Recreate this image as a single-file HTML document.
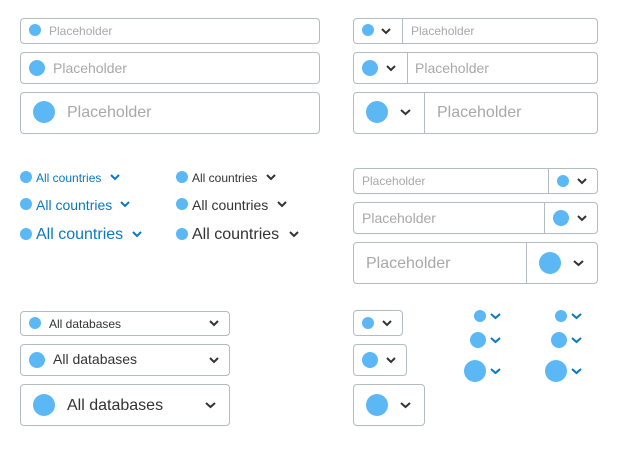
<!DOCTYPE html>
<html><head><meta charset="utf-8"><style>
*{margin:0;padding:0;box-sizing:border-box}
body{width:617px;height:455px;background:#fff;position:relative;overflow:hidden;font-family:"Liberation Sans",sans-serif}
div,svg{position:absolute}
.b{border:1px solid #b4bcbf;border-radius:4px;background:#fff}
.d{background:#5bb8f5;border-radius:50%}
.v{width:1px;background:#b4bcbf}
.t{white-space:nowrap;margin-top:1px}
.p{color:#a8a8a8}
.k{color:#333}
.u{color:#0a79c1}
</style></head><body>
<div class="b" style="left:20px;top:18px;width:300px;height:26px"></div>
<div class="d" style="left:29px;top:24px;width:12px;height:12px"></div>
<div class="t p" style="left:49px;top:23px;font-size:12px;line-height:15px">Placeholder</div>
<div class="b" style="left:20px;top:52px;width:300px;height:32px"></div>
<div class="d" style="left:29px;top:60px;width:16px;height:16px"></div>
<div class="t p" style="left:53px;top:59px;font-size:14px;line-height:17px">Placeholder</div>
<div class="b" style="left:20px;top:92px;width:300px;height:42px"></div>
<div class="d" style="left:33px;top:101px;width:22px;height:22px"></div>
<div class="t p" style="left:67px;top:102px;font-size:16px;line-height:20px">Placeholder</div>

<div class="b" style="left:353px;top:18px;width:245px;height:26px"></div>
<div class="v" style="left:402px;top:18px;height:26px"></div>
<div class="d" style="left:362px;top:24px;width:12px;height:12px"></div>
<svg style="left:381px;top:28px" width="10" height="7"><polyline points="1,1 5,5 9,1" fill="none" stroke="#333" stroke-width="2"/></svg>
<div class="t p" style="left:411px;top:23px;font-size:12px;line-height:15px">Placeholder</div>
<div class="b" style="left:353px;top:52px;width:245px;height:32px"></div>
<div class="v" style="left:407px;top:52px;height:32px"></div>
<div class="d" style="left:362px;top:60px;width:16px;height:16px"></div>
<svg style="left:386px;top:65px" width="10" height="7"><polyline points="1,1 5,5 9,1" fill="none" stroke="#333" stroke-width="2"/></svg>
<div class="t p" style="left:415px;top:59px;font-size:14px;line-height:17px">Placeholder</div>
<div class="b" style="left:353px;top:92px;width:245px;height:42px"></div>
<div class="v" style="left:424px;top:92px;height:42px"></div>
<div class="d" style="left:366px;top:101px;width:22px;height:22px"></div>
<svg style="left:400px;top:109px" width="11" height="7"><polyline points="1,1 5.5,5 10,1" fill="none" stroke="#333" stroke-width="2"/></svg>
<div class="t p" style="left:437px;top:102px;font-size:16px;line-height:20px">Placeholder</div>

<div class="d" style="left:20px;top:171px;width:12px;height:12px"></div>
<div class="t u" style="left:36px;top:170px;font-size:12px;line-height:15px">All countries</div>
<svg style="left:110px;top:174px" width="10" height="7"><polyline points="1,1 5,5 9,1" fill="none" stroke="#0a79c1" stroke-width="2"/></svg>
<div class="d" style="left:20px;top:198px;width:12px;height:12px"></div>
<div class="t u" style="left:36px;top:196px;font-size:14px;line-height:17px">All countries</div>
<svg style="left:120px;top:201px" width="10" height="7"><polyline points="1,1 5,5 9,1" fill="none" stroke="#0a79c1" stroke-width="2"/></svg>
<div class="d" style="left:20px;top:228px;width:12px;height:12px"></div>
<div class="t u" style="left:36px;top:224px;font-size:16px;line-height:20px">All countries</div>
<svg style="left:132px;top:231px" width="10" height="7"><polyline points="1,1 5,5 9,1" fill="none" stroke="#0a79c1" stroke-width="2"/></svg>
<div class="d" style="left:176px;top:171px;width:12px;height:12px"></div>
<div class="t k" style="left:192px;top:170px;font-size:12px;line-height:15px">All countries</div>
<svg style="left:266px;top:174px" width="10" height="7"><polyline points="1,1 5,5 9,1" fill="none" stroke="#333" stroke-width="2"/></svg>
<div class="d" style="left:176px;top:198px;width:12px;height:12px"></div>
<div class="t k" style="left:192px;top:196px;font-size:14px;line-height:17px">All countries</div>
<svg style="left:277px;top:201px" width="10" height="7"><polyline points="1,1 5,5 9,1" fill="none" stroke="#333" stroke-width="2"/></svg>
<div class="d" style="left:176px;top:228px;width:12px;height:12px"></div>
<div class="t k" style="left:192px;top:224px;font-size:16px;line-height:20px">All countries</div>
<svg style="left:289px;top:231px" width="10" height="7"><polyline points="1,1 5,5 9,1" fill="none" stroke="#333" stroke-width="2"/></svg>

<div class="b" style="left:353px;top:168px;width:245px;height:26px"></div>
<div class="v" style="left:548px;top:168px;height:26px"></div>
<div class="t p" style="left:362px;top:173px;font-size:12px;line-height:15px">Placeholder</div>
<div class="d" style="left:557px;top:175px;width:12px;height:12px"></div>
<svg style="left:577px;top:178px" width="10" height="7"><polyline points="1,1 5,5 9,1" fill="none" stroke="#333" stroke-width="2"/></svg>
<div class="b" style="left:353px;top:202px;width:245px;height:32px"></div>
<div class="v" style="left:544px;top:202px;height:32px"></div>
<div class="t p" style="left:362px;top:209px;font-size:14px;line-height:17px">Placeholder</div>
<div class="d" style="left:553px;top:210px;width:16px;height:16px"></div>
<svg style="left:577px;top:215px" width="10" height="7"><polyline points="1,1 5,5 9,1" fill="none" stroke="#333" stroke-width="2"/></svg>
<div class="b" style="left:353px;top:242px;width:245px;height:42px"></div>
<div class="v" style="left:526px;top:242px;height:42px"></div>
<div class="t p" style="left:366px;top:253px;font-size:16px;line-height:20px">Placeholder</div>
<div class="d" style="left:539px;top:252px;width:22px;height:22px"></div>
<svg style="left:573px;top:260px" width="11" height="7"><polyline points="1,1 5.5,5 10,1" fill="none" stroke="#333" stroke-width="2"/></svg>

<div class="b" style="left:20px;top:311px;width:210px;height:25px"></div>
<div class="d" style="left:29px;top:317px;width:12px;height:12px"></div>
<div class="t k" style="left:49px;top:316px;font-size:12px;line-height:15px">All databases</div>
<svg style="left:209px;top:320px" width="10" height="7"><polyline points="1,1 5,5 9,1" fill="none" stroke="#333" stroke-width="2"/></svg>
<div class="b" style="left:20px;top:344px;width:210px;height:32px"></div>
<div class="d" style="left:29px;top:352px;width:16px;height:16px"></div>
<div class="t k" style="left:53px;top:350px;font-size:14px;line-height:17px">All databases</div>
<svg style="left:209px;top:357px" width="10" height="7"><polyline points="1,1 5,5 9,1" fill="none" stroke="#333" stroke-width="2"/></svg>
<div class="b" style="left:20px;top:384px;width:210px;height:42px"></div>
<div class="d" style="left:33px;top:394px;width:22px;height:22px"></div>
<div class="t k" style="left:67px;top:395px;font-size:16px;line-height:20px">All databases</div>
<svg style="left:205px;top:402px" width="11" height="7"><polyline points="1,1 5.5,5 10,1" fill="none" stroke="#333" stroke-width="2"/></svg>

<div class="b" style="left:353px;top:310px;width:50px;height:26px"></div>
<div class="d" style="left:362px;top:317px;width:12px;height:12px"></div>
<svg style="left:382px;top:320px" width="10" height="7"><polyline points="1,1 5,5 9,1" fill="none" stroke="#333" stroke-width="2"/></svg>
<div class="b" style="left:353px;top:344px;width:54px;height:32px"></div>
<div class="d" style="left:362px;top:352px;width:16px;height:16px"></div>
<svg style="left:386px;top:357px" width="10" height="7"><polyline points="1,1 5,5 9,1" fill="none" stroke="#333" stroke-width="2"/></svg>
<div class="b" style="left:353px;top:384px;width:72px;height:42px"></div>
<div class="d" style="left:366px;top:394px;width:22px;height:22px"></div>
<svg style="left:400px;top:402px" width="11" height="7"><polyline points="1,1 5.5,5 10,1" fill="none" stroke="#333" stroke-width="2"/></svg>

<div class="d" style="left:474px;top:310px;width:12px;height:12px"></div>
<svg style="left:490px;top:313px" width="11" height="7"><polyline points="1,1 5.5,5 10,1" fill="none" stroke="#0a79c1" stroke-width="2"/></svg>
<div class="d" style="left:470px;top:332px;width:16px;height:16px"></div>
<svg style="left:490px;top:337px" width="11" height="7"><polyline points="1,1 5.5,5 10,1" fill="none" stroke="#0a79c1" stroke-width="2"/></svg>
<div class="d" style="left:464px;top:360px;width:22px;height:22px"></div>
<svg style="left:490px;top:368px" width="11" height="7"><polyline points="1,1 5.5,5 10,1" fill="none" stroke="#0a79c1" stroke-width="2"/></svg>
<div class="d" style="left:555px;top:310px;width:12px;height:12px"></div>
<svg style="left:571px;top:313px" width="11" height="7"><polyline points="1,1 5.5,5 10,1" fill="none" stroke="#0a79c1" stroke-width="2"/></svg>
<div class="d" style="left:551px;top:332px;width:16px;height:16px"></div>
<svg style="left:571px;top:337px" width="11" height="7"><polyline points="1,1 5.5,5 10,1" fill="none" stroke="#0a79c1" stroke-width="2"/></svg>
<div class="d" style="left:545px;top:360px;width:22px;height:22px"></div>
<svg style="left:571px;top:368px" width="11" height="7"><polyline points="1,1 5.5,5 10,1" fill="none" stroke="#0a79c1" stroke-width="2"/></svg>
</body></html>
